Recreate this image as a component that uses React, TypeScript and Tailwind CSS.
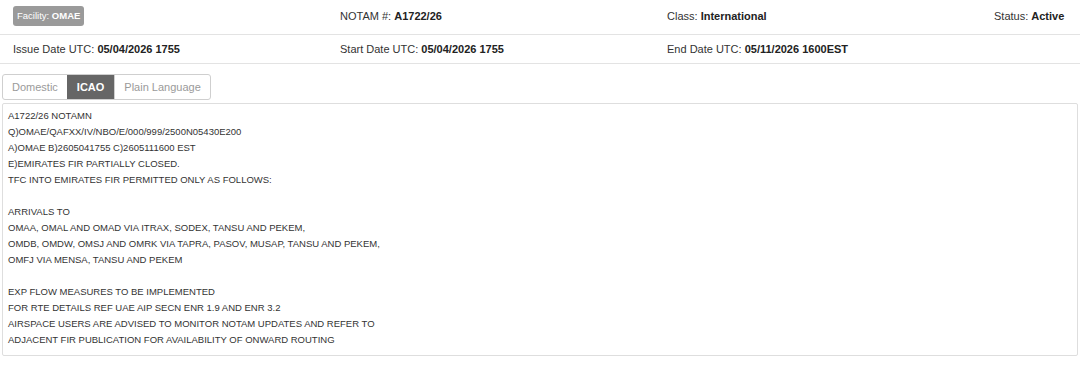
import React from 'react';

const notamLines = [
  'A1722/26 NOTAMN',
  'Q)OMAE/QAFXX/IV/NBO/E/000/999/2500N05430E200',
  'A)OMAE B)2605041755 C)2605111600 EST',
  'E)EMIRATES FIR PARTIALLY CLOSED.',
  'TFC INTO EMIRATES FIR PERMITTED ONLY AS FOLLOWS:',
  '',
  'ARRIVALS TO',
  'OMAA, OMAL AND OMAD VIA ITRAX, SODEX, TANSU AND PEKEM,',
  'OMDB, OMDW, OMSJ AND OMRK VIA TAPRA, PASOV, MUSAP, TANSU AND PEKEM,',
  'OMFJ VIA MENSA, TANSU AND PEKEM',
  '',
  'EXP FLOW MEASURES TO BE IMPLEMENTED',
  'FOR RTE DETAILS REF UAE AIP SECN ENR 1.9 AND ENR 3.2',
  'AIRSPACE USERS ARE ADVISED TO MONITOR NOTAM UPDATES AND REFER TO',
  'ADJACENT FIR PUBLICATION FOR AVAILABILITY OF ONWARD ROUTING',
];

const Field = ({ label, value }: { label: string; value: string }) => (
  <span className="whitespace-nowrap">
    {label} <b className="font-bold text-[#222]">{value}</b>
  </span>
);

const App = () => {
  return (
    <div className="w-[1080px] h-[365px] bg-white text-[11px] text-[#333] font-['Liberation_Sans',Arial,sans-serif]">
      <div className="grid grid-cols-[327px_327px_327px_1fr] items-center h-[35px] pl-[13px] pr-[18px] pb-[2px] border-b border-[#e3e3e3]">
        <div>
          <span className="inline-flex items-center h-[20px] px-[4px] rounded-[3px] bg-[#9a9a9a] text-white text-[9.5px]">
            Facility:&nbsp;<b className="font-bold">OMAE</b>
          </span>
        </div>
        <Field label="NOTAM #:" value="A1722/26" />
        <Field label="Class:" value="International" />
        <div className="text-right">
          <Field label="Status:" value="Active" />
        </div>
      </div>
      <div className="grid grid-cols-[327px_327px_327px_1fr] items-center h-[29px] pl-[13px] pr-[18px] border-b border-[#e3e3e3]">
        <Field label="Issue Date UTC:" value="05/04/2026 1755" />
        <Field label="Start Date UTC:" value="05/04/2026 1755" />
        <Field label="End Date UTC:" value="05/11/2026 1600EST" />
        <div />
      </div>

      <div className="px-[2px] pt-[10px]">
        <div className="inline-flex h-[26px] border border-[#cfcfcf] rounded-[3px] overflow-hidden text-[11px]">
          <button className="px-[9px] text-[#9a9a9a]">Domestic</button>
          <button className="px-[10px] bg-[#666] text-white font-bold">ICAO</button>
          <button className="px-[9px] text-[#9a9a9a] border-l border-[#cfcfcf]">Plain Language</button>
        </div>
        <div className="mt-[3px] border border-[#dedede] rounded-[2px] px-[5px] pt-[4px] pb-[7px] text-[9.5px] leading-[16px] text-[#333]">
          {notamLines.map((line, i) => (
            <div key={i} className="h-[16px] whitespace-pre">
              {line}
            </div>
          ))}
        </div>
      </div>
    </div>
  );
};

export default App;
